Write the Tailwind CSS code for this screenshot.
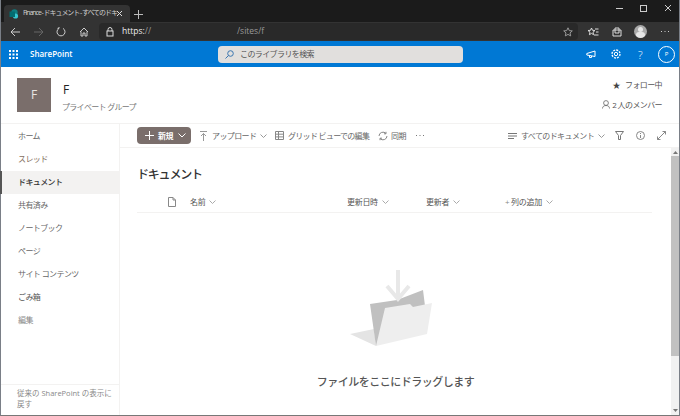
<!DOCTYPE html>
<html lang="ja">
<head>
    <meta charset="UTF-8">
    <title>Finance - ドキュメント</title>
    <script src="https://cdn.jsdelivr.net/npm/@tailwindcss/browser@4"></script>
</head>
<body class="w-[680px] h-[416px] overflow-hidden bg-white font-['Open_Sans','Noto_Sans_CJK_JP',sans-serif]">
<div class="flex flex-col h-[416px] border-x border-b border-x-[#7a7f87] border-b-[#777777]">
    <!-- tab strip -->
    <div class="h-[22px] bg-[#1b1b1b] flex items-end shrink-0 pl-[3px]">
        <div class="w-[126px] h-[17px] bg-[#333333] rounded-t flex items-center pl-[5px] gap-[4px]">
            <svg class="shrink-0" width="10" height="10" viewBox="0 0 10 10"><circle cx="5.500" cy="3.500" r="3.200" fill="#0f7c80"/><circle cx="6.500" cy="7" r="2.600" fill="#37c6d0"/><rect x="0.500" y="2.500" width="5.500" height="5.500" fill="#036c70"/></svg>
            <span class="text-[7px] tracking-[-1.050px] text-[#cfcfcf] whitespace-nowrap w-[89px]">Finance - ドキュメント - すべてのドキ</span>
            <svg class="shrink-0" width="7" height="7" viewBox="0 0 7 7" stroke="#ddd" stroke-width="1"><path d="M1 1l5 5M6 1l-5 5"/></svg>
        </div>
        <svg class="ml-[4px] mb-[3px]" width="9" height="9" viewBox="0 0 9 9" stroke="#bbb" stroke-width="1"><path d="M4.500 0v9M0 4.500h9"/></svg>
        <div class="ml-auto flex items-center self-start h-[16px] gap-[17px] pr-[7px]">
            <div class="w-[7px] h-px bg-[#ccc]"></div>
            <div class="w-[7px] h-[7px] border border-[#ccc]"></div>
            <svg width="8" height="8" viewBox="0 0 8 8" stroke="#ccc" stroke-width="1"><path d="M1 1l6 6M7 1l-6 6"/></svg>
        </div>
    </div>
    <!-- address bar -->
    <div class="h-[19px] bg-[#333333] flex items-center shrink-0">
        <svg class="ml-[9px]" width="11" height="10" viewBox="0 0 11 10" stroke="#ccc" fill="none"><path d="M10 5H1M5 1L1 5l4 4"/></svg>
        <svg class="ml-[12px]" width="11" height="10" viewBox="0 0 11 10" stroke="#666" fill="none"><path d="M1 5h9M6 1l4 4-4 4"/></svg>
        <svg class="ml-[12px]" width="10" height="10" viewBox="0 0 10 10" stroke="#ccc" fill="none"><path d="M3 1.400A4 4 0 1 0 7 1.400M3 1.400V0M3 1.400H1.500"/></svg>
        <svg class="ml-[13px]" width="10" height="10" viewBox="0 0 10 10" stroke="#ccc" fill="none"><path d="M1 5l4-4 4 4M2 4.500V9h2V6h2v3h2V4.500"/></svg>
        <div class="ml-[10px] w-[479px] h-[17px] bg-[#292929] rounded-sm flex items-center pl-[7px] text-[8.500px]">
            <svg width="8" height="10" viewBox="0 0 8 10" stroke="#ddd" fill="none"><rect x="1" y="4" width="6" height="5"/><path d="M2 4V2.500a2 2 0 0 1 4 0V4"/></svg>
            <span class="ml-[8px] text-[#eeeeee]">https:</span><span class="text-[#9a9a9a]">//</span>
            <span class="ml-[86px] text-[#9a9a9a]">/sites/f</span>
            <svg class="ml-auto mr-[5px]" width="10" height="10" viewBox="0 0 10 10" stroke="#999" fill="none"><path d="M5 .8l1.300 2.800 3 .3-2.300 2 .7 3L5 7.400 2.300 8.900l.7-3-2.300-2 3-.3z"/></svg>
        </div>
        <svg class="ml-[9px]" width="12" height="10" viewBox="0 0 12 10" stroke="#ddd" fill="none"><path d="M4.500 1l1 2.300 2.500.2-2 1.700.6 2.500-2.100-1.300L2.400 7.700l.6-2.500-2-1.700 2.500-.2zM8 2h3.500M9 5h2.500M7 8h4.500"/></svg>
        <svg class="ml-[13px]" width="10" height="10" viewBox="0 0 10 10" stroke="#ddd" fill="none"><path d="M1 3h2V1h4v2h2v6H1zM3 3h4v3H3z"/></svg>
        <div class="ml-[12px] w-[13px] h-[13px] rounded-full bg-[#a8a8a8] flex flex-col items-center overflow-hidden">
            <div class="w-[5px] h-[5px] rounded-full bg-[#e6e6e6] mt-[2px]"></div>
            <div class="w-[9px] h-[6px] rounded-full bg-[#e6e6e6]"></div>
        </div>
        <svg class="ml-[14px]" width="8" height="2" viewBox="0 0 8 2" fill="#ccc"><rect width="1" height="1"/><rect x="3.500" width="1" height="1"/><rect x="7" width="1" height="1"/></svg>
    </div>
    <!-- suite bar -->
    <div class="h-[26px] bg-[#0078d4] flex items-center shrink-0 text-white">
        <svg class="ml-[8px]" width="9" height="9" viewBox="0 0 9 9" fill="#fff"><rect width="2" height="2"/><rect x="3.500" width="2" height="2"/><rect x="7" width="2" height="2"/><rect y="3.500" width="2" height="2"/><rect x="3.500" y="3.500" width="2" height="2"/><rect x="7" y="3.500" width="2" height="2"/><rect y="7" width="2" height="2"/><rect x="3.500" y="7" width="2" height="2"/><rect x="7" y="7" width="2" height="2"/></svg>
        <span class="ml-[12px] w-[41px] text-[8px] font-semibold whitespace-nowrap">SharePoint</span>
        <div class="ml-[147px] w-[245px] h-[17px] bg-[#e1dfdd] rounded-sm flex items-center pl-[7px] text-[8px] tracking-[-0.6px] text-[#555]">
            <svg width="9" height="9" viewBox="0 0 9 9" stroke="#3a76b0" fill="none"><circle cx="5.500" cy="3.500" r="2.800"/><path d="M3.500 5.500L.5 8.500"/></svg>
            <span class="ml-[6px]">このライブラリを検索</span>
        </div>
        <svg class="ml-[123px]" width="10" height="9" viewBox="0 0 10 9" stroke="#fff" fill="none"><path d="M.8 3.500L9 1v5.500L.8 5zM3.500 5.500v2h2V6"/></svg>
        <svg class="ml-[15px]" width="10" height="10" viewBox="0 0 10 10" stroke="#fff" fill="none"><circle cx="5" cy="5" r="1.700"/><circle cx="5" cy="5" r="4" stroke-dasharray="2 1.100" stroke-width="1.300"/></svg>
        <span class="ml-[17px] w-[6px] text-[11px] font-light leading-none">?</span>
        <div class="ml-[14px] w-[17px] h-[17px] rounded-full border border-white text-[6px] flex items-center justify-center">P</div>
    </div>
    <!-- site header -->
    <div class="h-[57px] flex shrink-0 pl-[16px] pt-[11px] border-b border-[#f3f2f1]">
        <div class="w-[34px] h-[34px] bg-[#7a6e6b] text-[#e8e4e2] text-[12px] flex items-center justify-center">F</div>
        <div class="ml-[11px]">
            <div class="text-[12px] font-medium leading-[16px] mt-[4px] ml-px text-[#222]">F</div>
            <div class="text-[8px] tracking-[-0.7px] leading-[13px] mt-[2px] text-[#777]">プライベート グループ</div>
        </div>
        <div class="ml-auto pr-[17px] flex flex-col items-end text-[8px] tracking-[-0.6px] text-[#555]">
            <div class="flex items-center gap-[5px] h-[13px]"><span class="text-[8px] text-[#444]">★</span><span>フォロー中</span></div>
            <div class="flex items-center gap-[2px] h-[13px] mt-[7px]">
                <svg width="8" height="9" viewBox="0 0 8 9" stroke="#666" fill="none" stroke-width=".8"><circle cx="4" cy="3" r="2.400"/><path d="M.5 8.500c0-2 1.500-3 3.500-3s3.500 1 3.500 3"/></svg>
                <span>2 人のメンバー</span>
            </div>
        </div>
    </div>
    <div class="flex flex-1 min-h-0">
        <!-- left nav -->
        <div class="w-[119px] shrink-0 flex flex-col pt-px border-r border-[#f3f2f1] text-[8px] tracking-[-0.6px] text-[#666]">
            <div class="h-[23px] flex items-center pl-[17px] pb-px">ホーム</div>
            <div class="h-[23px] flex items-center pl-[17px] pb-px text-[#85705f]">スレッド</div>
            <div class="h-[23px] flex items-center pl-[16px] pb-px bg-[#f3f2f1] border-l-2 border-[#555] -ml-px text-[#333] font-medium">ドキュメント</div>
            <div class="h-[23px] flex items-center pl-[17px] pb-px">共有済み</div>
            <div class="h-[23px] flex items-center pl-[17px] pb-px">ノートブック</div>
            <div class="h-[23px] flex items-center pl-[17px] pb-px">ページ</div>
            <div class="h-[23px] flex items-center pl-[17px] pb-px">サイト コンテンツ</div>
            <div class="h-[23px] flex items-center pl-[17px] pb-px text-[#555]">ごみ箱</div>
            <div class="h-[23px] flex items-center pl-[17px] pb-px text-[#888]">編集</div>
            <div class="mt-auto border-t border-[#f3f2f1] pl-[16px] pr-[4px] pt-[3px] h-[31px] text-[7.500px] tracking-normal leading-[11px] text-[#888]">従来の SharePoint の表示に戻す</div>
        </div>
        <div class="flex-1 min-w-0 flex flex-col">
            <!-- command bar -->
            <div class="h-[24px] shrink-0 flex items-center pl-[17px] border-b border-[#f3f2f1] text-[8px] tracking-[-0.6px] text-[#666]">
                <div class="w-[54px] h-[17px] bg-[#7a6e6b] text-white rounded-sm flex items-center pl-[8px] font-semibold">
                    <svg width="9" height="9" viewBox="0 0 9 9" stroke="#fff"><path d="M4.500 0v9M0 4.500h9"/></svg>
                    <span class="ml-[4px]">新規</span>
                    <svg class="ml-[5px]" width="8" height="5" viewBox="0 0 8 5" stroke="#fff" fill="none"><path d="M.5 .5L4 4 7.500 .5"/></svg>
                </div>
                <svg class="ml-[9px]" width="7" height="10" viewBox="0 0 7 10" stroke="#999" fill="none"><path d="M0 .5h7M3.500 10V2.500M1 5l2.500-2.500L6 5"/></svg>
                <span class="ml-[5px] w-[44px] whitespace-nowrap">アップロード</span>
                <svg class="ml-[4px]" width="7" height="4" viewBox="0 0 7 4" stroke="#999" fill="none"><path d="M.5 .5L3.500 3.500 6.500 .5"/></svg>
                <svg class="ml-[8px]" width="9" height="9" viewBox="0 0 9 9" stroke="#888" fill="none"><path d="M.5 .5h8v8h-8zM.5 3.200h8M.5 5.900h8M3.500 .5v8"/></svg>
                <span class="ml-[4px] w-[82px] whitespace-nowrap tracking-[-0.7px]">グリッド ビューでの編集</span>
                <svg class="ml-[8px]" width="10" height="10" viewBox="0 0 10 10" stroke="#888" fill="none"><path d="M1 5a4 4 0 0 1 7-2.500M9 5a4 4 0 0 1-7 2.500M8 .8v2H6M2 9.200v-2h2"/></svg>
                <span class="ml-[3px] w-[15px] whitespace-nowrap">同期</span>
                <svg class="ml-[10px]" width="8" height="2" viewBox="0 0 8 2" fill="#777"><rect width="1" height="1"/><rect x="3.500" width="1" height="1"/><rect x="7" width="1" height="1"/></svg>
                <svg class="ml-auto" width="9" height="6" viewBox="0 0 9 6" stroke="#777" fill="none"><path d="M0 .5h9M0 3h9M0 5.500h6"/></svg>
                <span class="ml-[4px] w-[74px] whitespace-nowrap">すべてのドキュメント</span>
                <svg class="ml-[3px]" width="7" height="4" viewBox="0 0 7 4" stroke="#999" fill="none"><path d="M.5 .5L3.500 3.500 6.500 .5"/></svg>
                <svg class="ml-[10px]" width="9" height="9" viewBox="0 0 9 9" stroke="#777" fill="none"><path d="M.5 .5h8L5.500 4.500v4h-2v-4z"/></svg>
                <svg class="ml-[12px]" width="9" height="9" viewBox="0 0 9 9" stroke="#888" fill="none"><circle cx="4.500" cy="4.500" r="4"/><path d="M4.500 4v3M4.500 2v1"/></svg>
                <svg class="ml-[12px] mr-[13px]" width="9" height="9" viewBox="0 0 9 9" stroke="#888" fill="none"><path d="M.5 8.500l8-8M5.500 .5h3v3M.5 5.500v3h3"/></svg>
            </div>
            <div class="flex flex-1 min-h-0">
                <!-- document list -->
                <div class="flex-1 min-w-0 pl-[17px] pr-[19px] flex flex-col">
                    <div class="h-[24px] mt-[15px] text-[12px] tracking-[-1.200px] font-medium text-[#333] flex items-center">ドキュメント</div>
                    <div class="mt-[4px] h-[22px] flex items-center border-b border-[#f3f2f1] text-[8px] tracking-[-0.3px] text-[#555]">
                        <svg class="ml-[31px]" width="8" height="10" viewBox="0 0 8 10" stroke="#888" fill="none"><path d="M.5 .5h4.500l2.500 2.500v6.500h-7zM5 .5V3h2.500"/></svg>
                        <span class="ml-[14px] w-[157px]">名前<svg class="inline ml-[4px]" width="7" height="4" viewBox="0 0 7 4" stroke="#aaa" fill="none"><path d="M.5 .5L3.500 3.500 6.500 .5"/></svg></span>
                        <span class="w-[79px]">更新日時<svg class="inline ml-[4px]" width="7" height="4" viewBox="0 0 7 4" stroke="#aaa" fill="none"><path d="M.5 .5L3.500 3.500 6.500 .5"/></svg></span>
                        <span class="w-[79px]">更新者<svg class="inline ml-[4px]" width="7" height="4" viewBox="0 0 7 4" stroke="#aaa" fill="none"><path d="M.5 .5L3.500 3.500 6.500 .5"/></svg></span>
                        <span><span class="text-[#888]">+</span> 列の追加<svg class="inline ml-[4px]" width="7" height="4" viewBox="0 0 7 4" stroke="#aaa" fill="none"><path d="M.5 .5L3.500 3.500 6.500 .5"/></svg></span>
                    </div>
                    <div class="flex flex-col items-center mt-[56px]">
                        <svg class="mr-[6px]" width="84" height="78" viewBox="0 0 84 78">
                            <path d="M0 65l24-5 2 17z" fill="#e4e4e4"/>
                            <path d="M20 35l27-4 26-10 2 16-49 40z" fill="#c0c0c0"/>
                            <path d="M48 1v29M37 17l11 13 11-13" stroke="#e8e8e8" stroke-width="4" fill="none"/>
                            <path d="M26 77l9-38 25-4 3 3 19-4-5 31z" fill="#eeeeee"/>
                        </svg>
                        <div class="ml-[2px] mt-[27px] text-[11px] tracking-[-0.5px] font-medium text-[#555]">ファイルをここにドラッグします</div>
                    </div>
                </div>
                <!-- scrollbar -->
                <div class="w-[8px] shrink-0 bg-[#f1f1f1] flex flex-col items-center">
                    <svg class="mt-[3px]" width="5" height="3" viewBox="0 0 5 3" fill="#777"><path d="M2.500 0L5 3H0z"/></svg>
                    <div class="w-full h-[200px] bg-[#c1c1c1] mt-[2px]"></div>
                    <svg class="mt-auto mb-[3px]" width="5" height="3" viewBox="0 0 5 3" fill="#777"><path d="M0 0h5L2.500 3z"/></svg>
                </div>
            </div>
        </div>
    </div>
</div>
</body>
</html>
